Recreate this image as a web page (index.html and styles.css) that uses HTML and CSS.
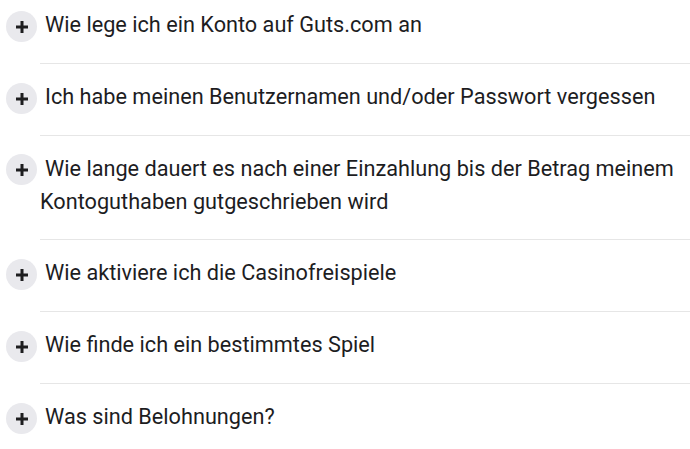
FILE: index.html
```html
<!DOCTYPE html>
<html lang="de">
<head>
    <meta charset="UTF-8">
    <meta name="viewport" content="width=device-width, initial-scale=1.0">
    <title>FAQ</title>
    <link rel="stylesheet" href="styles.css">
</head>
<body>

<ul class="faq-list">
    <li class="faq-item">
        <span class="faq-toggle"><svg viewBox="0 0 12 12" width="12" height="12"><path d="M6 0v12M0 6h12"/></svg></span>Wie lege ich ein Konto auf Guts.com an
    </li>
    <li class="faq-item">
        <span class="faq-toggle"><svg viewBox="0 0 12 12" width="12" height="12"><path d="M6 0v12M0 6h12"/></svg></span>Ich habe meinen Benutzernamen und/oder Passwort vergessen
    </li>
    <li class="faq-item">
        <span class="faq-toggle"><svg viewBox="0 0 12 12" width="12" height="12"><path d="M6 0v12M0 6h12"/></svg></span>Wie lange dauert es nach einer Einzahlung bis der Betrag meinem Kontoguthaben gutgeschrieben wird
    </li>
    <li class="faq-item">
        <span class="faq-toggle"><svg viewBox="0 0 12 12" width="12" height="12"><path d="M6 0v12M0 6h12"/></svg></span>Wie aktiviere ich die Casinofreispiele
    </li>
    <li class="faq-item">
        <span class="faq-toggle"><svg viewBox="0 0 12 12" width="12" height="12"><path d="M6 0v12M0 6h12"/></svg></span>Wie finde ich ein bestimmtes Spiel
    </li>
    <li class="faq-item">
        <span class="faq-toggle"><svg viewBox="0 0 12 12" width="12" height="12"><path d="M6 0v12M0 6h12"/></svg></span>Was sind Belohnungen?
    </li>
</ul>

</body>
</html>
```

FILE: styles.css
```css
body {
    margin: 0;
    background-color: #fff;
    font-family: Roboto, "Liberation Sans", sans-serif;
    color: #1d1d1f;
}
.faq-list {
    list-style: none;
    margin: 0;
    padding: 0;
}
.faq-item {
    margin-left: 40px;
    padding: 16px 0 21px 0;
    border-top: 1px solid #e6e6e6;
    font-size: 21.7px;
    line-height: 33px;
}
.faq-item:first-child {
    border-top: none;
    padding-top: 8px;
}
.faq-toggle {
    display: inline-block;
    width: 31px;
    height: 31px;
    margin-left: -34px;
    margin-right: 8px; /* gap before the question text */
    border-radius: 50%;
    background-color: #e9e9ed;
    vertical-align: middle;
    text-align: center;
    line-height: 0;
}
.faq-toggle svg {
    margin-top: 10px;
    stroke: #1d1d1f;
    stroke-width: 3;
}
```
